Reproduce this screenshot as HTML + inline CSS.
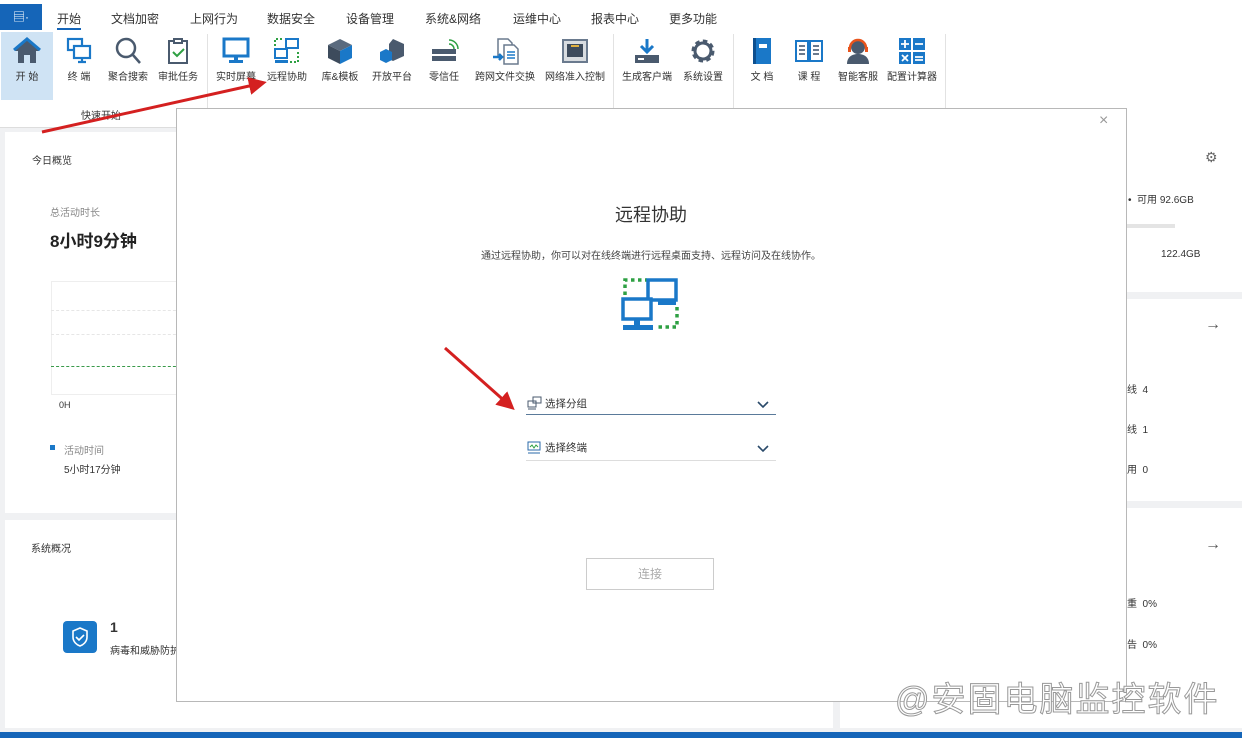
<!DOCTYPE html>
<html><head><meta charset="utf-8"><style>
*{margin:0;padding:0;box-sizing:border-box}
body{width:1242px;height:738px;overflow:hidden;position:relative;background:#f0f1f3;font-family:"Liberation Sans","Noto Sans CJK SC",sans-serif;color:#333;font-size:11px}
.a{position:absolute}
.tab{position:absolute;top:10px;font-size:12px;color:#333;transform:translateX(-50%);white-space:nowrap}
.it{position:absolute;top:68px;font-size:10px;color:#333;transform:translateX(-50%);white-space:nowrap}
.ic{position:absolute;top:36px;width:30px;height:30px;transform:translateX(-50%)}
.sep{position:absolute;top:34px;width:1px;height:90px;background:#e2e2e2}
.card{position:absolute;background:#fff}
</style></head><body>
<div class="a" style="left:0;top:0;width:1242px;height:128px;background:#fff;border-bottom:1px solid #ddd"></div>
<div class="a" style="left:0;top:4px;width:42px;height:26px;background:#1565b8;color:#fff;font-size:12px;text-align:center;line-height:26px">▤·</div>
<div class="tab" style="left:69px">开始</div>
<div class="a" style="left:57px;top:28px;width:24px;height:2px;background:#1565b8"></div>
<div class="tab" style="left:135px">文档加密</div>
<div class="tab" style="left:214px">上网行为</div>
<div class="tab" style="left:291px">数据安全</div>
<div class="tab" style="left:370px">设备管理</div>
<div class="tab" style="left:453px">系统&amp;网络</div>
<div class="tab" style="left:537px">运维中心</div>
<div class="tab" style="left:615px">报表中心</div>
<div class="tab" style="left:693px">更多功能</div>
<div class="a" style="left:1px;top:32px;width:52px;height:68px;background:#cfe3f4"></div>
<svg class="ic" style="left:27px" viewBox="0 0 30 30"><path d="M3 15 L15 4 L27 15 L24 15 L24 27 L18 27 L18 19 L12 19 L12 27 L6 27 L6 15Z" fill="#4a5a6e"/><path d="M2 14 L15 3 L28 14" stroke="#1a78c8" stroke-width="3" fill="none"/></svg>
<svg class="ic" style="left:79px" viewBox="0 0 30 30" fill="none" stroke="#1a78c8" stroke-width="2.2"><rect x="4" y="3" width="14" height="11"/><rect x="10" y="10" width="16" height="12" fill="#fff"/><path d="M14 26h8M18 22v4"/></svg>
<svg class="ic" style="left:128px" viewBox="0 0 30 30" fill="none" stroke="#4a5a6e" stroke-width="2.5"><circle cx="13" cy="12" r="9"/><path d="M20 19l7 8"/></svg>
<svg class="ic" style="left:178px" viewBox="0 0 30 30" fill="none" stroke="#4a5a6e" stroke-width="2"><rect x="6" y="5" width="18" height="22"/><rect x="11" y="3" width="8" height="4" fill="#fff"/><path d="M10 16l4 4 7-7" stroke="#2ea043"/></svg>
<div class="sep" style="left:207px"></div>
<svg class="ic" style="left:236px" viewBox="0 0 30 30"><rect x="3" y="3" width="24" height="17" fill="none" stroke="#1a78c8" stroke-width="3"/><rect x="13" y="20" width="4" height="4" fill="#1a78c8"/><rect x="8" y="24" width="14" height="3" fill="#1a78c8"/></svg>
<svg class="ic" style="left:287px" viewBox="0 0 30 30"><rect x="14" y="3" width="12" height="9" fill="none" stroke="#1a78c8" stroke-width="2"/><rect x="3" y="13" width="12" height="9" fill="none" stroke="#1a78c8" stroke-width="2"/><rect x="3" y="24" width="13" height="3" fill="#1a78c8"/><path d="M3 10V3h8M26 16v10h-8" stroke="#2ea043" stroke-width="2" stroke-dasharray="2 2" fill="none"/></svg>
<svg class="ic" style="left:340px" viewBox="0 0 30 30"><path d="M15 3 L27 9 L15 15 L3 9Z" fill="#5a6a7e"/><path d="M3 9 L15 15 L15 28 L3 22Z" fill="#3d4b5c"/><path d="M27 9 L15 15 L15 28 L27 22Z" fill="#1a78c8"/></svg>
<svg class="ic" style="left:392px" viewBox="0 0 30 30"><path d="M16 3 L27 8 L27 20 L16 25 L12 23 L12 8Z" fill="#4a5a6e"/><path d="M9 13 L15 16 L15 24 L9 27 L3 24 L3 16Z" fill="#1a78c8"/></svg>
<svg class="ic" style="left:444px" viewBox="0 0 30 30"><rect x="3" y="13" width="24" height="5" fill="#4a5a6e"/><rect x="3" y="20" width="24" height="5" fill="#4a5a6e"/><path d="M20 8a5 5 0 0 1 5 5M20 4a9 9 0 0 1 9 9" stroke="#2ea043" stroke-width="1.5" fill="none"/></svg>
<svg class="ic" style="left:505px" viewBox="0 0 30 30" fill="none" stroke="#6a7a8e" stroke-width="1.5"><path d="M8 3h10l4 4v14H8z"/><path d="M14 9h10l4 4v15H14z" fill="#fff"/><path d="M17 16h8M17 19h8M17 22h8" stroke="#1a78c8"/><path d="M3 21h9M9 18l3 3-3 3" stroke="#1a78c8" stroke-width="2.5"/></svg>
<svg class="ic" style="left:575px" viewBox="0 0 30 30"><rect x="3" y="4" width="24" height="22" fill="#d8dce0" stroke="#6a7a8e" stroke-width="2"/><rect x="7" y="8" width="16" height="13" fill="#3d4b5c"/><rect x="11" y="9" width="8" height="2" fill="#e0b040"/></svg>
<div class="sep" style="left:613px"></div>
<svg class="ic" style="left:647px" viewBox="0 0 30 30"><path d="M15 3v13M9 10l6 6 6-6" stroke="#1a78c8" stroke-width="3" fill="none"/><rect x="3" y="19" width="24" height="8" fill="#4a5a6e"/><rect x="6" y="22" width="6" height="2" fill="#fff"/></svg>
<svg class="ic" style="left:703px" viewBox="0 0 30 30"><circle cx="15" cy="15" r="9" fill="none" stroke="#4a5a6e" stroke-width="5" stroke-dasharray="4 3"/><circle cx="15" cy="15" r="8" fill="none" stroke="#4a5a6e" stroke-width="3"/><circle cx="15" cy="15" r="3" fill="#fff"/></svg>
<div class="sep" style="left:733px"></div>
<svg class="ic" style="left:762px" viewBox="0 0 30 30"><rect x="6" y="2" width="18" height="26" fill="#1a78c8"/><rect x="6" y="2" width="3" height="26" fill="#0d4f8f"/><rect x="12" y="8" width="8" height="4" fill="#fff"/></svg>
<svg class="ic" style="left:809px" viewBox="0 0 30 30" fill="none" stroke="#1a78c8" stroke-width="2"><path d="M2 5h12v20H2zM16 5h12v20H16z"/><path d="M5 10h6M5 14h6M5 18h6M19 10h6M19 14h6M19 18h6" stroke="#6a7a8e"/></svg>
<svg class="ic" style="left:858px" viewBox="0 0 30 30"><circle cx="15" cy="11" r="7" fill="#4a5a6e"/><path d="M4 28c0-7 5-10 11-10s11 3 11 10z" fill="#4a5a6e"/><path d="M7 12a8 8 0 0 1 16 0" stroke="#e8541c" stroke-width="2.5" fill="none"/><rect x="5" y="11" width="3" height="5" fill="#e8541c"/><rect x="22" y="11" width="3" height="5" fill="#e8541c"/></svg>
<svg class="ic" style="left:912px" viewBox="0 0 30 30"><rect x="2" y="2" width="12" height="12" fill="#1a78c8"/><rect x="16" y="2" width="12" height="12" fill="#1a78c8"/><rect x="2" y="16" width="12" height="12" fill="#1a78c8"/><rect x="16" y="16" width="12" height="12" fill="#1a78c8"/><path d="M8 4v8M4 8h8M18 8h8M5 19l6 6M11 19l-6 6M18 21h8M18 24h8" stroke="#fff" stroke-width="1.8"/></svg>
<div class="sep" style="left:945px"></div>
<div class="it" style="left:27px">开 始</div>
<div class="it" style="left:79px">终 端</div>
<div class="it" style="left:128px">聚合搜索</div>
<div class="it" style="left:178px">审批任务</div>
<div class="it" style="left:236px">实时屏幕</div>
<div class="it" style="left:287px">远程协助</div>
<div class="it" style="left:340px">库&amp;模板</div>
<div class="it" style="left:392px">开放平台</div>
<div class="it" style="left:444px">零信任</div>
<div class="it" style="left:505px">跨网文件交换</div>
<div class="it" style="left:575px">网络准入控制</div>
<div class="it" style="left:647px">生成客户端</div>
<div class="it" style="left:703px">系统设置</div>
<div class="it" style="left:762px">文 档</div>
<div class="it" style="left:809px">课 程</div>
<div class="it" style="left:858px">智能客服</div>
<div class="it" style="left:912px">配置计算器</div>
<div class="a" style="left:81px;top:107px;font-size:10px">快速开始</div>

<div class="card" style="left:5px;top:132px;width:828px;height:381px"></div>
<div class="a" style="left:32px;top:152px;font-size:10px">今日概览</div>
<div class="a" style="left:50px;top:204px;font-size:10px;color:#888">总活动时长</div>
<div class="a" style="left:50px;top:227px;font-size:17px;font-weight:bold;color:#222">8小时9分钟</div>
<div class="a" style="left:51px;top:281px;width:130px;height:114px;border:1px solid #eee"></div>
<div class="a" style="left:51px;top:310px;width:130px;border-top:1px dashed #e6e6e6"></div>
<div class="a" style="left:51px;top:334px;width:130px;border-top:1px dashed #e6e6e6"></div>
<div class="a" style="left:51px;top:366px;width:130px;border-top:1px dashed #3a9a4a"></div>
<div class="a" style="left:59px;top:400px;font-size:9px">0H</div>
<div class="a" style="left:50px;top:445px;width:5px;height:5px;background:#1a78c8"></div>
<div class="a" style="left:64px;top:442px;font-size:10px;color:#888">活动时间</div>
<div class="a" style="left:64px;top:461px;font-size:10px">5小时17分钟</div>
<div class="card" style="left:5px;top:520px;width:828px;height:208px"></div>
<div class="a" style="left:31px;top:540px;font-size:10px">系统概况</div>
<div class="a" style="left:63px;top:621px;width:34px;height:32px;background:#1a78c8;border-radius:4px"></div>
<svg class="a" style="left:70px;top:626px" width="20" height="22" viewBox="0 0 20 22" fill="none" stroke="#fff" stroke-width="1.6"><path d="M10 2l7 3v6c0 5-4 8-7 9-3-1-7-4-7-9V5z"/><path d="M6 11l3 3 5-5"/></svg>
<div class="a" style="left:110px;top:619px;font-size:14px;font-weight:bold">1</div>
<div class="a" style="left:110px;top:642px;font-size:10px;white-space:nowrap">病毒和威胁防护</div>

<div class="card" style="left:840px;top:124px;width:402px;height:168px"></div>
<div class="card" style="left:840px;top:299px;width:402px;height:202px"></div>
<div class="card" style="left:840px;top:508px;width:402px;height:220px"></div>
<div class="a" style="left:1205px;top:149px;font-size:14px;color:#666">⚙</div>
<div class="a" style="left:1128px;top:191px;font-size:10px">•&nbsp; 可用 92.6GB</div>
<div class="a" style="left:1127px;top:224px;width:48px;height:4px;background:#e4e4e4"></div>
<div class="a" style="left:1161px;top:249px;font-size:10px">122.4GB</div>
<div class="a" style="left:1205px;top:316px;font-size:16px;color:#555">→</div>
<div class="a" style="left:1205px;top:536px;font-size:16px;color:#555">→</div>
<div class="a" style="left:1127px;top:381px;font-size:10px">线&nbsp; 4</div>
<div class="a" style="left:1127px;top:421px;font-size:10px">线&nbsp; 1</div>
<div class="a" style="left:1127px;top:461px;font-size:10px">用&nbsp; 0</div>
<div class="a" style="left:1127px;top:595px;font-size:10px">重&nbsp; 0%</div>
<div class="a" style="left:1127px;top:636px;font-size:10px">告&nbsp; 0%</div>
<div class="a" style="left:0;top:732px;width:1242px;height:6px;background:#1565b8"></div>

<div class="a" style="left:176px;top:108px;width:951px;height:594px;background:#fff;border:1px solid #b8b8b8"></div>
<div class="a" style="left:1099px;top:112px;font-size:16px;color:#999">×</div>
<div class="a" style="left:0;width:1302px;top:201px;text-align:center;font-size:18px;color:#333">远程协助</div>
<div class="a" style="left:0;width:1302px;top:247px;text-align:center;font-size:10px;color:#444">通过远程协助，你可以对在线终端进行远程桌面支持、远程访问及在线协作。</div>
<svg class="a" style="left:620px;top:275px" width="62" height="62" viewBox="0 0 62 62"><path d="M5 20V5h22M57 32v20H36" stroke="#2ea043" stroke-width="3.5" stroke-dasharray="3.5 3.5" fill="none"/><rect x="28" y="5" width="28" height="20" fill="#fff" stroke="#1a78c8" stroke-width="3.5"/><rect x="38" y="26" width="18" height="4" fill="#1a78c8"/><rect x="3" y="24" width="28" height="20" fill="#fff" stroke="#1a78c8" stroke-width="3.5"/><rect x="3" y="50" width="30" height="5" fill="#1a78c8"/><rect x="14" y="45" width="6" height="5" fill="#1a78c8"/></svg>
<svg class="a" style="left:527px;top:396px" width="15" height="14" viewBox="0 0 15 14" fill="none" stroke="#4a5a6e"><rect x="1" y="5" width="8" height="6"/><rect x="6" y="1" width="8" height="6"/><path d="M1 13h8"/></svg>
<div class="a" style="left:545px;top:396px;font-size:10.5px">选择分组</div>
<div class="a" style="left:526px;top:414px;width:250px;height:1px;background:#5a7a9a"></div>
<svg class="a" style="left:527px;top:441px" width="14" height="13" viewBox="0 0 14 13" fill="none" stroke="#2a6aaa"><rect x="1" y="1" width="12" height="8"/><path d="M3 6l2-2 2 3 2-3 2 2" stroke="#2ea043"/><path d="M1 12h12"/></svg>
<div class="a" style="left:545px;top:440px;font-size:10.5px">选择终端</div>
<div class="a" style="left:526px;top:460px;width:250px;height:1px;background:#ddd"></div>
<svg class="a" style="left:756px;top:400px" width="14" height="60" fill="none" stroke="#2a4a6a" stroke-width="1.6"><path d="M2 2l5 5 5-5M2 46l5 5 5-5"/></svg>
<div class="a" style="left:586px;top:558px;width:128px;height:32px;border:1px solid #ccc;text-align:center;line-height:30px;font-size:12px;color:#aaa">连接</div>

<svg class="a" style="left:0;top:0" width="1242" height="738"><defs><marker id="m" markerWidth="6" markerHeight="6" refX="3" refY="3" orient="auto"><path d="M0 0L6 3L0 6Z" fill="#d42020"/></marker></defs>
<path d="M42 132L258 84" stroke="#d42020" stroke-width="3" marker-end="url(#m)"/>
<path d="M445 348L508 404" stroke="#d42020" stroke-width="3" marker-end="url(#m)"/></svg>
<div class="a" style="left:895px;top:672px;font-size:34px;letter-spacing:2px;color:#fff;-webkit-text-stroke:1px #999;white-space:nowrap">@安固电脑监控软件</div>
</body></html>
